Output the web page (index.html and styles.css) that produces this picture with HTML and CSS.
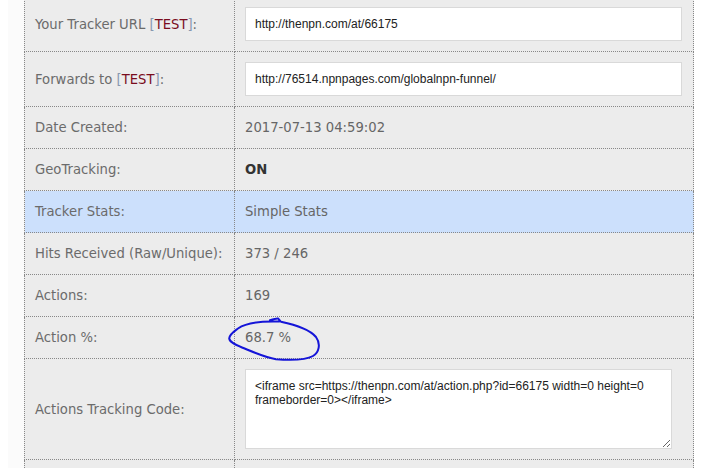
FILE: index.html
```html
<!DOCTYPE html>
<html lang="en">
<head>
    <meta charset="UTF-8">
    <meta name="viewport" content="width=device-width, initial-scale=1.0">
    <title>Tracker Details</title>
    <link rel="stylesheet" href="styles.css">
</head>
<body>

<div class="page">
    <div class="panel">
        <table class="tracker-table">
            <tr class="input-row">
                <td class="label">Your Tracker URL <span class="br">[</span><span class="test">TEST</span><span class="br">]</span>:</td>
                <td class="value"><input type="text" class="field" value="http://thenpn.com/at/66175" readonly></td>
            </tr>
            <tr class="input-row">
                <td class="label">Forwards to <span class="br">[</span><span class="test">TEST</span><span class="br">]</span>:</td>
                <td class="value"><input type="text" class="field" value="http://76514.npnpages.com/globalnpn-funnel/" readonly></td>
            </tr>
            <tr>
                <td class="label">Date Created:</td>
                <td class="value">2017-07-13 04:59:02</td>
            </tr>
            <tr>
                <td class="label">GeoTracking:</td>
                <td class="value"><strong>ON</strong></td>
            </tr>
            <tr class="highlight">
                <td class="label">Tracker Stats:</td>
                <td class="value">Simple Stats</td>
            </tr>
            <tr>
                <td class="label">Hits Received (Raw/Unique):</td>
                <td class="value">373 / 246</td>
            </tr>
            <tr>
                <td class="label">Actions:</td>
                <td class="value">169</td>
            </tr>
            <tr>
                <td class="label">Action %:</td>
                <td class="value marked">68.7 %
                    <svg class="scribble" viewBox="0 0 100 50" width="100" height="50">
                        <path d="M43 5.2 C46 4.2, 49 3.2, 51 3.4 C52 4, 52.5 5.6, 54 6.8 C67 9.5, 82 14, 89 22 C94 29, 92 37.5, 86 41 C78 45.5, 60 45, 49 44.2 C38 42.5, 26 37, 15 32.5 C8 29.5, 2.5 27, 2.2 23.3 C2.8 19, 7 16.5, 11 13.5 C19 8, 32 6, 52 6.6"
                              fill="none" stroke="#1515d8" stroke-width="2" stroke-linecap="round" stroke-linejoin="round"/>
                    </svg>
                </td>
            </tr>
            <tr class="input-row">
                <td class="label">Actions Tracking Code:</td>
                <td class="value"><textarea class="code" readonly>&lt;iframe src=https://thenpn.com/at/action.php?id=66175 width=0 height=0 frameborder=0&gt;&lt;/iframe&gt;</textarea></td>
            </tr>
            <tr>
                <td class="label">&nbsp;</td>
                <td class="value">&nbsp;</td>
            </tr>
        </table>
    </div>
</div>

</body>
</html>
```
FILE: styles.css
```css
body {
    margin: 0;
    background: #fff;
    font-family: 'DejaVu Sans', Verdana, sans-serif;
    font-size: 13.2px;
    color: #666;
}

.page {
    padding-left: 8px;
    margin-top: -3px;
}

.panel {
    display: inline-block;
    background: #fbfbfb;
    padding-left: 16px;
}

.tracker-table {
    border-collapse: collapse;
    width: 670px;
    background: #ececec;
}

.tracker-table td {
    border: 1px dotted #888;
    padding: 12px 11px 12px 10px;
    line-height: 17px;
    vertical-align: middle;
}

.tracker-table td.label {
    width: 191px;
    padding-right: 8px;
    white-space: nowrap;
    color: #6b6b6b;
}

.tracker-table tr:first-child td {
    border-top: none;
}

.input-row td {
    padding-top: 10px;
    padding-bottom: 10px;
}

.highlight td {
    background: #cce0fc;
}

.br {
    color: #8797b0;
}

.test {
    color: #7a0c1e;
}

.value strong {
    color: #333;
}

.marked {
    position: relative;
}

.scribble {
    position: absolute;
    left: -8px;
    top: -2px;
    pointer-events: none;
}

.field {
    display: block;
    box-sizing: border-box;
    width: 100%;
    height: 34px;
    padding: 0 9px;
    border: 1px solid #d9d9d9;
    background: #fff;
    font-family: 'Liberation Sans', Arial, sans-serif;
    font-size: 12px;
    color: #222;
    outline: none;
}

.code {
    display: block;
    box-sizing: border-box;
    width: 427px;
    height: 80px;
    padding: 9px 9px;
    border: 1px solid #d9d9d9;
    background: #fff;
    font-family: 'Liberation Sans', Arial, sans-serif;
    font-size: 12px;
    line-height: 14px;
    color: #222;
    resize: both;
    outline: none;
}
```
